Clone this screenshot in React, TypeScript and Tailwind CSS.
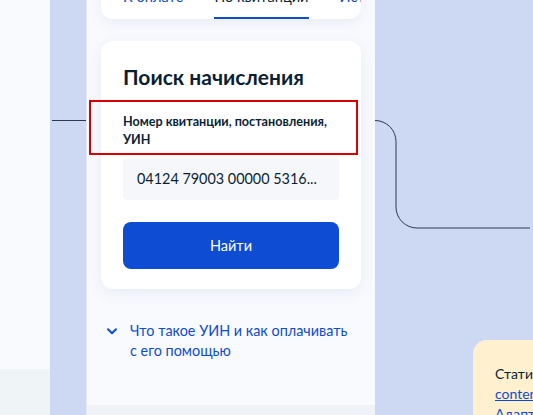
import React from "react";

const Chevron = () => (
  <svg width="10" height="7" viewBox="0 0 10 7" fill="none" className="shrink-0">
    <path d="M1 1.2L5 5.2L9 1.2" stroke="#0d4cd3" strokeWidth="2" strokeLinecap="round" strokeLinejoin="round" />
  </svg>
);

export default function App() {
  return (
    <div className="relative w-[533px] h-[415px] overflow-hidden flex font-['Lato','Noto_Sans',sans-serif] text-[#0b1f33]">
      {/* left page strip */}
      <div className="w-[50px] shrink-0 flex flex-col">
        <div className="h-[369px] bg-[#f9fafe]" />
        <div className="flex-1 bg-[#eff4f7]" />
      </div>
      <div className="w-[36px] shrink-0 bg-[#cdd8f3]" />

      {/* phone frame */}
      <div className="w-[289px] shrink-0 flex flex-col bg-[#f9fafe] border-l border-[#e4e9f8]">
        {/* tabs */}
        <div className="ml-[14px] w-[260px] -mt-[14px] bg-white rounded-[12px] shadow-[0_4px_14px_rgba(30,60,140,0.07)] overflow-hidden">
          <div className="flex pl-[22px] gap-[31px] text-[14.6px] leading-[22px] whitespace-nowrap">
            <div className="pb-[11px] text-[#0d4cd3]">К оплате</div>
            <div className="pb-[9px] border-b-2 border-[#0d4cd3]">По квитанции</div>
            <div className="pb-[11px] text-[#0d4cd3]">История</div>
          </div>
        </div>

        {/* search card */}
        <div className="ml-[14px] w-[260px] mt-[22px] bg-white rounded-[12px] shadow-[0_4px_16px_rgba(30,60,140,0.08)] px-[22px] pt-[22px] pb-[20px]">
          <h1 className="text-[21px] leading-[28px] font-bold">Поиск начисления</h1>
          <p className="mt-[22px] text-[12.6px] leading-[18px] font-bold">
            Номер квитанции, постановления, УИН
          </p>
          <div className="mt-[9px] h-[42px] bg-[#f5f7fa] rounded-[4px] flex items-center px-[14px] text-[14.4px] whitespace-nowrap">
            04124 79003 00000 5316...
          </div>
          <button className="mt-[22px] w-full h-[47px] bg-[#0d4cd3] rounded-[8px] text-white text-[14.5px]">
            Найти
          </button>
        </div>

        {/* help link */}
        <div className="mt-[32px] ml-[20px] flex items-start gap-[13px] text-[14.4px] leading-[20px] text-[#0d4cd3]">
          <div className="pt-[7px]">
            <Chevron />
          </div>
          <div>
            Что такое УИН и как оплачивать
            <br />
            с его помощью
          </div>
        </div>

        <div className="mt-auto h-[10px] bg-[#eff3f8]" />
      </div>

      {/* right canvas */}
      <div className="flex-1 bg-[#cdd8f3] pt-[340px] pl-[98px]">
        <div className="h-full bg-[#fff0cf] rounded-tl-[14px] pl-[22px] pt-[24px] text-[14px] leading-[20px] whitespace-nowrap">
          <p>Статистика</p>
          <p className="text-[#0d4cd3] underline">content</p>
          <p className="text-[#0d4cd3] underline">Адаптив</p>
        </div>
      </div>

      {/* connectors */}
      <svg className="absolute inset-0 pointer-events-none" width="533" height="415" fill="none">
        <path d="M52 120.5H86" stroke="#2b3a52" strokeWidth="1" />
        <path d="M375 120.5a21 21 0 0 1 21 21V207a21 21 0 0 0 21 21H530" stroke="#2b3a52" strokeWidth="1" />
      </svg>

      {/* annotation box */}
      <div className="absolute left-[89px] top-[100px] w-[269px] h-[55px] border-2 border-[#d90000]" />
    </div>
  );
}
